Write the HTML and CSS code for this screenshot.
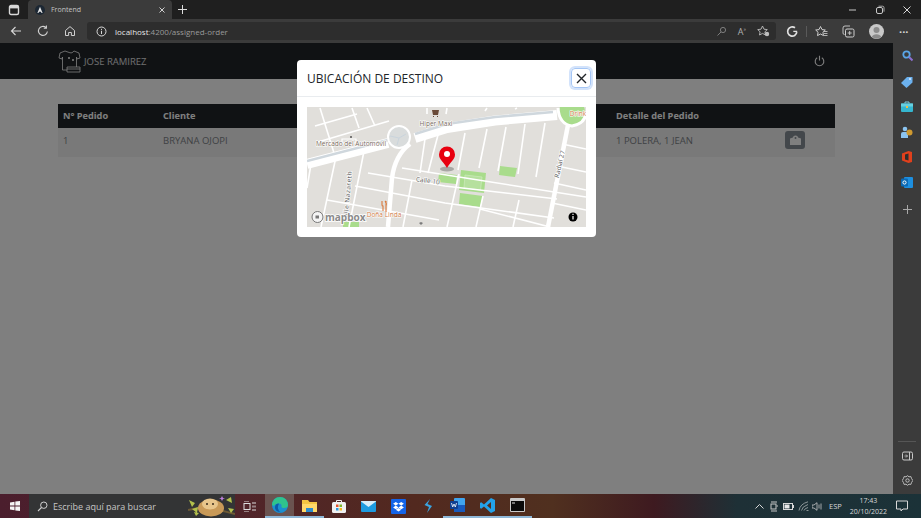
FILE: index.html
```html
<!DOCTYPE html>
<html lang="en">
<head>
  <meta charset="UTF-8">
  <meta name="viewport" content="width=device-width, initial-scale=1.0">
  <title>Frontend</title>
  <link rel="stylesheet" href="styles.css">
</head>
<body>

<div class="tabbar">
  <svg class="tab-actions" width="12" height="12" viewBox="0 0 12 12"><rect x="1.5" y="1.5" width="9" height="9" rx="1.5" fill="none" stroke="#d8d8d8" stroke-width="1.4"/><rect x="2" y="2" width="8" height="2.4" fill="#d8d8d8"/></svg>
  <div class="tab">
    <svg width="10" height="10" viewBox="0 0 10 10"><circle cx="5" cy="5" r="5" fill="#1c2733"/><path d="M5 1.8 7.6 8H6.5L6 6.7H4L3.5 8H2.4Z" fill="#e8e8e8"/></svg>
    <span class="tab-title">Frontend</span>
    <svg class="tab-close" width="8" height="8" viewBox="0 0 8 8"><path d="M1.5 1.5l5 5M6.5 1.5l-5 5" stroke="#d0d0d0" stroke-width="1"/></svg>
  </div>
  <svg class="tab-new" width="11" height="11" viewBox="0 0 11 11"><path d="M5.5 1v9M1 5.5h9" stroke="#dcdcdc" stroke-width="1"/></svg>
  <div class="window-btns">
    <svg width="10" height="10" viewBox="0 0 10 10"><path d="M1 5h7" stroke="#c8c8c8"/></svg>
    <svg width="10" height="10" viewBox="0 0 10 10"><rect x="1.5" y="2.5" width="6" height="6" rx="1.5" fill="none" stroke="#c8c8c8"/><path d="M3.5 1.2h4A1.5 1.5 0 0 1 9 2.700v4" fill="none" stroke="#c8c8c8" stroke-width=".8"/></svg>
    <svg width="10" height="10" viewBox="0 0 10 10"><path d="M1.500 1.500l7 7M8.500 1.500l-7 7" stroke="#d8d8d8" stroke-width="1"/></svg>
  </div>
</div>

<div class="toolbar">
  <svg class="nav-icon" width="12" height="12" viewBox="0 0 12 12"><path d="M11 6H1.500M5.500 2 1.500 6l4 4" fill="none" stroke="#d8d8d8" stroke-width="1.100"/></svg>
  <svg class="nav-icon" width="12" height="12" viewBox="0 0 12 12"><path d="M10.400 6.500A4.500 4.500 0 1 1 8.800 2.400M9.400 .6v2.600H6.800" fill="none" stroke="#d0d0d0" stroke-width="1.100"/></svg>
  <svg class="nav-icon" width="12" height="12" viewBox="0 0 12 12"><path d="M1.500 5.500 6 1.600l4.500 3.900V10.500H7.400V7.500H4.600V10.500H1.500Z" fill="none" stroke="#d0d0d0" stroke-width="1"/></svg>
  <div class="addressbar">
    <svg width="11" height="11" viewBox="0 0 11 11"><circle cx="5.500" cy="5.500" r="4.500" fill="none" stroke="#d8d8d8"/><path d="M5.500 4.800v3.200M5.500 2.800v1.100" stroke="#d8d8d8"/></svg>
    <span class="url"><b>localhost</b>:4200/assigned-order</span>
    <div class="address-icons">
      <svg width="11" height="11" viewBox="0 0 11 11"><circle cx="7" cy="4" r="2.600" fill="none" stroke="#7d7d7d"/><path d="M5 6 1.500 9.500" stroke="#7d7d7d"/></svg>
      <span class="read-aloud">A<sup>»</sup></span>
      <svg width="13" height="12" viewBox="0 0 13 12"><path d="M5.500 1 7 4.200l3.300.4-2.400 2.200.6 3.200-3-1.600-3 1.600.6-3.200L.7 4.600 4 4.200Z" fill="none" stroke="#bdbdbd" stroke-width=".9"/><circle cx="10" cy="9" r="2.200" fill="#bdbdbd"/></svg>
    </div>
  </div>
  <div class="toolbar-right">
    <svg width="13" height="13" viewBox="0 0 13 13"><path d="M10.800 7.200A4.600 4.600 0 1 1 9 2.800" fill="none" stroke="#e2e2e2" stroke-width="1.700"/><path d="M7.300 6.400h3.900" stroke="#e2e2e2" stroke-width="1.300"/></svg>
    <span class="toolbar-sep"></span>
    <svg width="13" height="13" viewBox="0 0 13 13"><path d="M5.500 1.500 7 4.600l3.300.4-2.400 2.300.6 3.300-3-1.600-3 1.600.6-3.300L.7 5 4 4.600Z" fill="none" stroke="#d0d0d0"/><path d="M9 6.500h3.500M9 8.500h3.500M9 10.500h3.500" stroke="#d0d0d0" stroke-width=".8"/></svg>
    <svg width="13" height="13" viewBox="0 0 13 13"><rect x="3.500" y="4" width="8.500" height="8" rx="1.500" fill="none" stroke="#d0d0d0"/><path d="M2.500 9.500A1.500 1.500 0 0 1 1 8V3a2 2 0 0 1 2-2h5M7.700 6v4M5.700 8h4" fill="none" stroke="#d0d0d0" stroke-width=".9"/></svg>
    <svg class="avatar" width="15" height="15" viewBox="0 0 15 15"><circle cx="7.500" cy="7.500" r="7.500" fill="#c9c9c9"/><circle cx="7.500" cy="6" r="3" fill="#8b8b8b"/><path d="M2.800 12.800a5 4 0 0 1 9.400 0 7.500 7.500 0 0 1-9.400 0Z" fill="#8b8b8b"/></svg>
    <span class="more">···</span>
  </div>
</div>

<div class="viewport">
  <main class="app">
    <nav class="app-nav">
      <svg class="app-logo" width="23" height="24" viewBox="0 0 23 24"><path d="M7 2 2 4 1 9l3 1 .5-2V21h14V8l.5 2 3-1-1-5-5-2-2 1.800h-2Z" fill="none" stroke="#fff" stroke-width=".8"/><circle cx="11" cy="9" r="1" fill="#fff"/><circle cx="15" cy="11" r="1" fill="#fff"/><path d="M9 18h13v5H9zM9 20h13" fill="#212529" stroke="#fff" stroke-width=".8"/></svg>
      <span class="app-user">JOSE RAMIREZ</span>
      <svg class="app-power" width="11" height="12" viewBox="0 0 11 12"><path d="M3.200 2.800a4.300 4.300 0 1 0 4.600 0M5.500 .8v4.600" fill="none" stroke="#fff" stroke-width="1.100"/></svg>
    </nav>
    <div class="app-content">
      <table class="orders">
        <thead>
          <tr>
            <th class="col-id">N° Pedido</th>
            <th class="col-client">Cliente</th>
            <th class="col-hidden"></th>
            <th class="col-detail">Detalle del Pedido</th>
            <th></th>
          </tr>
        </thead>
        <tbody>
          <tr>
            <td>1</td>
            <td>BRYANA OJOPI</td>
            <td></td>
            <td>1 POLERA, 1 JEAN</td>
            <td>
              <button class="map-btn" type="button">
                <svg width="11" height="10" viewBox="0 0 11 10"><path d="M0 3.500 3 2.500 5.500 3.500 8 2.500 11 3.500V10H0Z" fill="#fff"/><circle cx="5.500" cy="3" r="2.600" fill="#fff"/><circle cx="5.500" cy="3" r="1" fill="#868e96"/></svg>
              </button>
            </td>
          </tr>
        </tbody>
      </table>
    </div>

    <div class="backdrop">
      <div class="modal">
        <div class="modal-header">
          <h5 class="modal-title">UBICACIÓN DE DESTINO</h5>
          <button class="modal-close" type="button">
            <svg width="11" height="11" viewBox="0 0 11 11"><path d="M1 1l9 9M10 1l-9 9" stroke="#212529" stroke-width="1.400"/></svg>
          </button>
        </div>
        <div class="modal-body">
          <svg class="map" width="279" height="120" viewBox="0 -1 279 120">
            <rect y="-1" width="279" height="120" fill="#e1dfdb"/>
            <!-- parks -->
            <g fill="#a9dc8c">
              <circle cx="265" cy="4" r="13"/>
              <path d="M132 65l18 2-1 9-18-2Z"/>
              <path d="M154 62l25 3-2 20-25-3Z"/>
              <path d="M153 85l23 3-3 11-21-3Z"/>
              <path d="M193 58l17 2-2 9-16-2Z"/>
              <path d="M36 114h16v5H36Z"/>
            </g>
            <path d="M158 67l17 2-1.500 13-16.500-2Z" fill="#b6e09e" stroke="#c9e8b6" stroke-width=".8"/>
            <!-- small streets -->
            <g fill="none" stroke="#fff" stroke-width="1.600">
              <path d="M13 0 27 45M8 18 50 6M11 34 82 13M45 0 52 20M60 0 68 18"/>
              <path d="M5 50 0 80M30 44 14 119M58 38 42 119"/>
              <path d="M118 31 113 65M131 27 121 65M158 25 151 62M180 21 172 60M199 19 191 63M218 16 211 66M238 15 229 69"/>
              <path d="M61 65 138 78 250 91M95 60 279 89"/>
              <path d="M48 78 138 95 247 110"/>
              <path d="M20 92 132 112"/>
              <path d="M152 66 140 119M176 88 169 119M212 92 206 119M105 72 96 119"/>
              <path d="M173 101 243 119M247 75 279 82M250 58 279 64M255 36 279 41M245 95 279 102"/>
              <path d="M120 0V6M140 0 139 6M180 0 178 3M210 0 208 1"/>
            </g>
            <!-- main avenue -->
            <path d="M0 56 81 35M108 30 140 20 188 12.500 250 7" fill="none" stroke="#fff" stroke-width="10"/>
            <path d="M0 53 81 32M108 26 140 16 188 9 246 4" fill="none" stroke="#cfd7dd" stroke-width="2.500"/>
            <path d="M261 17 241 119" fill="none" stroke="#fff" stroke-width="4.500"/>
            <path d="M103 36Q88 47 85 70L81 119" fill="none" stroke="#fff" stroke-width="4.500"/>
            <path d="M86 20 91 30M251 0Q252 16 265 18 278 16 279 5" fill="none" stroke="#fff" stroke-width="3"/>
            <circle cx="92" cy="29" r="11" fill="#d9dcdc" stroke="#fff" stroke-width="2"/>
            <path d="M83 28 92 30 90 37M92 30 99 26" fill="none" stroke="#c5d2dc" stroke-width=".8"/>
            <path d="M35 31h14v4H35Z" fill="none" stroke="#fff" stroke-width="1.200"/>
            <circle cx="44" cy="29" r="1" fill="#555"/>
            <!-- labels -->
            <g class="map-label">
              <text class="map-label-brown" x="129" y="18" text-anchor="middle">Hiper Maxi</text>
              <text class="map-label-brown" x="44" y="38" text-anchor="middle">Mercado del Automóvil</text>
              <text class="map-label-orange" x="271" y="7.500" text-anchor="middle">Drink</text>
              <text x="121" y="75" text-anchor="middle" transform="rotate(8 121 72)">Calle 10</text>
              <text x="252" y="59" text-anchor="middle" transform="rotate(-77 252 56)">Radial 27</text>
              <text class="map-label-wide" x="40" y="89" text-anchor="middle" transform="rotate(-85 40 86)">alle Nazareth</text>
              <text class="map-label-orange" x="77" y="109" text-anchor="middle">Doña Linda</text>
            </g>
            <path d="M125 2h7l-1 5h-5ZM126 8h1v1h-1ZM130 8h1v1h-1Z" fill="#6a4a38"/>
            <path d="M75 93v4q0 1 1 1v5M79 93v11M78 93q2 2 1 5" fill="none" stroke="#d9783c" stroke-width="1.100"/>
            <path d="M112 115l2-1 2 1-2 2Z" fill="#7b7b7b"/>
            <!-- mapbox logo -->
            <circle cx="10.500" cy="109" r="5.500" fill="#f4f4f4" stroke="#777" stroke-width="1"/>
            <path d="M8.500 107.500h3.500v3H8.500Z" fill="#777"/>
            <text class="map-logo" x="18" y="112.500">mapbox</text>
            <circle cx="266" cy="109" r="4.500" fill="#000"/>
            <path d="M266 108v3.500M266 105.800v1.100" stroke="#fff" stroke-width="1.200"/>
            <!-- pin -->
            <ellipse cx="140" cy="61" rx="7" ry="2.500" fill="#000" opacity=".25"/>
            <path d="M140 60C137 54 132 52 132 46.500A8 8 0 0 1 148 46.500C148 52 143 54 140 60Z" fill="#e8000f"/>
            <circle cx="140" cy="46" r="3" fill="#fff"/>
          </svg>
        </div>
      </div>
    </div>
  </main>

  <aside class="edge-side">
    <svg width="11" height="12" viewBox="0 0 11 12"><circle cx="4.500" cy="4.500" r="3.200" fill="none" stroke="#5aa7e8" stroke-width="1.800"/><path d="M7 7l3.500 3.500" stroke="#8c6fd0" stroke-width="2"/></svg>
    <svg width="12" height="12" viewBox="0 0 12 12"><path d="M0 7 6 1h5.500v5.500l-6 5.500Z" fill="#6cb1ee"/><circle cx="9" cy="3" r="1" fill="#dcecff"/></svg>
    <svg width="12" height="11" viewBox="0 0 12 11"><path d="M4 2.500V1h4v1.500" fill="none" stroke="#7fd0e0"/><rect y="2.500" width="12" height="8.500" rx="1" fill="#35b6cf"/><rect y="2.500" width="12" height="3" fill="#66cfe0"/><rect x="5" y="5" width="2" height="2" fill="#f0c040"/></svg>
    <svg width="12" height="12" viewBox="0 0 12 12"><circle cx="4" cy="3" r="2.300" fill="#8cc4f0"/><path d="M0 12V8q0-2 2-2h4q1 0 1 2v4Z" fill="#8cc4f0"/><circle cx="8.500" cy="6.500" r="3" fill="#d09a30"/></svg>
    <svg width="10" height="12" viewBox="0 0 10 12"><path d="M0 2.500 6.500 0 10 1v10L6.500 12 0 9.500Z" fill="#e0401c"/><path d="M3 3.500 6.500 2.500V9.500L3 8.500Z" fill="#2d2d2d"/></svg>
    <svg width="12" height="11" viewBox="0 0 12 11"><rect x="3" width="9" height="11" rx="1" fill="#1d8fe0"/><rect width="7" height="8" y="1.500" rx="1" fill="#0b6ab5"/><circle cx="3.500" cy="5.500" r="1.600" fill="none" stroke="#fff"/></svg>
    <svg class="edge-plus" width="9" height="9" viewBox="0 0 9 9"><path d="M4.500 0v9M0 4.500h9" stroke="#a8a8a8" stroke-width="1"/></svg>
    <div class="edge-bottom">
      <span class="edge-rule"></span>
      <svg width="11" height="10" viewBox="0 0 11 10"><rect x=".5" y="1" width="10" height="8" rx="1.500" fill="none" stroke="#c8c8c8"/><path d="M7.500 1v8" stroke="#c8c8c8"/><path d="M2.500 5h3M4 3.500 5.500 5 4 6.500" fill="none" stroke="#c8c8c8" stroke-width=".8"/></svg>
      <svg width="11" height="11" viewBox="0 0 11 11"><path d="M5.500 .7 7 1.800 8.900 1.600 9.500 3.400 10.800 5.500 9.500 7.600 8.900 9.400 7 9.200 5.500 10.300 4 9.200 2.100 9.400 1.500 7.600 .2 5.500 1.500 3.400 2.100 1.600 4 1.800Z" fill="none" stroke="#c8c8c8" stroke-width=".9"/><circle cx="5.500" cy="5.500" r="1.700" fill="none" stroke="#c8c8c8" stroke-width=".9"/></svg>
    </div>
  </aside>
</div>

<footer class="taskbar">
  <div class="start">
    <svg width="10" height="10" viewBox="0 0 10 10"><path d="M0 1.400 4.500.7v3.900H0ZM5.300.6 10 0v4.600H5.300ZM0 5.400h4.500v3.900L0 8.600ZM5.300 5.400H10V10L5.300 9.400Z" fill="#f4f4f4"/></svg>
  </div>
  <div class="search">
    <svg width="11" height="11" viewBox="0 0 11 11"><circle cx="6.800" cy="4.200" r="3.200" fill="none" stroke="#d0d0d0"/><path d="M4.500 6.500 1 10" stroke="#d0d0d0" stroke-width="1.100"/></svg>
    <span class="search-text">Escribe aquí para buscar</span>
    <svg class="search-art" width="47" height="23" viewBox="0 0 47 23">
      <path d="M0 15Q16 10 47 19" fill="none" stroke="#6e5a34" stroke-width="2"/>
      <path d="M1 5l6 3-3 4ZM4 14l6-2-1 6ZM38 5l5-3 1 6ZM40 13l6 1-3 4ZM6 17l5 1-3 3Z" fill="#b3c04c"/>
      <ellipse cx="23" cy="13" rx="13" ry="8.500" fill="#c99a58"/>
      <ellipse cx="22" cy="9" rx="8" ry="5.500" fill="#e8c68c"/>
      <circle cx="19" cy="9" r="1" fill="#3a2a1a"/><circle cx="25" cy="9" r="1" fill="#3a2a1a"/>
      <path d="M34 1l1 2 2 .5-2 .5-1 2-1-2-2-.5 2-.5Z" fill="#c080e0"/>
    </svg>
  </div>
  <div class="task-slot">
    <svg width="13" height="11" viewBox="0 0 13 11"><path d="M1 0h5M1 11h5" stroke="#ddd"/><rect x="1" y="2.500" width="6" height="6" fill="none" stroke="#ddd"/><path d="M10 1v2M10 4.500v2M10 8v2M12 1v2M12 4.500v2M12 8v2" stroke="#ddd"/></svg>
  </div>
  <div class="task-slot task-slot-active">
    <svg width="16" height="16" viewBox="0 0 16 16"><circle cx="8" cy="8" r="8" fill="#1b8fd0"/><path d="M0 8Q1 0 8 0q7 0 8 8 0 3-4 3-3 0-2.500-2 .5-2-2.500-2.500Q3 6 2 9Z" fill="#2fc48d"/><path d="M7 6.500q-4 0-4 4 0 4 6 5-5-3-2-9Z" fill="#0d5aa7"/></svg>
  </div>
  <div class="task-slot task-slot-open">
    <svg width="15" height="13" viewBox="0 0 15 13"><path d="M0 1h6l1.500 2H15v10H0Z" fill="#f4c542"/><rect y="5" width="15" height="8" fill="#ffd86a"/><rect x="4" y="9" width="7" height="4" fill="#2b8ccf"/></svg>
  </div>
  <div class="task-slot">
    <svg width="14" height="14" viewBox="0 0 14 14"><path d="M4.500 3V1.500h5V3" fill="none" stroke="#eee"/><rect y="3" width="14" height="11" rx="1.500" fill="#f1f1f1"/><rect x="4" y="5.500" width="2.500" height="2.500" fill="#e8532b"/><rect x="7.500" y="5.500" width="2.500" height="2.500" fill="#7db82a"/><rect x="4" y="9" width="2.500" height="2.500" fill="#2a9be0"/><rect x="7.500" y="9" width="2.500" height="2.500" fill="#f5b81f"/></svg>
  </div>
  <div class="task-slot">
    <svg width="15" height="11" viewBox="0 0 15 11"><rect width="15" height="11" rx="1" fill="#1d9be0"/><path d="M0 .5 7.500 6 15 .5V0H0Z" fill="#d7eefa"/></svg>
  </div>
  <div class="task-slot">
    <svg width="15" height="15" viewBox="0 0 15 15"><rect width="15" height="15" rx="1" fill="#1464e8"/><path d="M4.800 3 7.500 4.800 4.800 6.600 2.100 4.800ZM10.200 3 12.900 4.800 10.200 6.600 7.500 4.800ZM4.800 6.600 7.500 8.400 10.200 6.600 12.900 8.400 10.200 10.200 7.500 8.400 4.800 10.200 2.100 8.400ZM4.800 10.800 7.500 9 10.200 10.800 7.500 12.500Z" fill="#fff"/></svg>
  </div>
  <div class="task-slot">
    <svg width="10" height="14" viewBox="0 0 10 14"><path d="M7 0 1.500 6 6 8 4 14 9 7 4.500 5Z" fill="#3aa4e0"/></svg>
  </div>
  <div class="task-slot task-slot-open">
    <svg width="15" height="14" viewBox="0 0 15 14"><rect x="4" y="0" width="11" height="14" rx="1" fill="#41a5ee"/><rect x="4" y="7" width="11" height="7" fill="#185abd"/><rect y="3" width="8" height="8" rx="1" fill="#103f91"/><path d="M1.500 5 2.700 9 4 6 5.300 9 6.500 5" fill="none" stroke="#fff" stroke-width=".8"/></svg>
  </div>
  <div class="task-slot task-slot-open">
    <svg width="15" height="15" viewBox="0 0 15 15"><path d="M11 0 15 2V13L11 15 4 8.500 1.200 10.800 0 10V5L1.200 4.200 4 6.500ZM11 4 7 7.500 11 11Z" fill="#23a3ea"/></svg>
  </div>
  <div class="task-slot task-slot-open">
    <svg width="15" height="14" viewBox="0 0 15 14"><rect width="15" height="14" rx="1" fill="#c9c9c9"/><rect x="1" y="3" width="13" height="10" fill="#0a0a0a"/><path d="M2 5h3" stroke="#ddd"/></svg>
  </div>

  <div class="tray">
    <svg class="tray-chevron" width="9" height="6" viewBox="0 0 9 6"><path d="M.5 5.500 4.500 1.500 8.500 5.500" fill="none" stroke="#d8d8d8"/></svg>
    <svg class="tray-device" width="8" height="11" viewBox="0 0 8 11"><path d="M1 1h6M1 10h6" stroke="#c8c8c8"/><rect x="1" y="3" width="5" height="5" fill="none" stroke="#c8c8c8"/><path d="M6.500 5h1.500" stroke="#c8c8c8"/></svg>
    <svg width="11" height="7" viewBox="0 0 11 7"><rect x=".5" y=".5" width="9" height="6" fill="none" stroke="#d8d8d8"/><rect x="1.500" y="1.500" width="5" height="4" fill="#e8e8e8"/><path d="M10.500 2v3" stroke="#d8d8d8"/></svg>
    <svg width="11" height="10" viewBox="0 0 11 10"><path d="M1 9.500Q2 3 10 .8M3.500 9.500Q4 5.500 10 3.500M6 9.500Q6.500 7.500 10 6.500M8.500 9.500h2" fill="none" stroke="#a8b0b0" stroke-width=".8"/></svg>
    <svg width="10" height="9" viewBox="0 0 10 9"><path d="M0 3h2L5 .7v7.600L2 6H0Z" fill="none" stroke="#c8c8c8" stroke-width=".8"/><path d="M7 2.500v4M9 1.500v6" stroke="#c8c8c8" stroke-width=".8"/></svg>
    <span class="tray-lang">ESP</span>
    <div class="tray-clock"><span>17:43</span><span>20/10/2022</span></div>
    <svg class="tray-notify" width="12" height="12" viewBox="0 0 12 12"><path d="M.5 1h11v8H7L5 11V9H.5Z" fill="none" stroke="#d8d8d8"/></svg>
  </div>
</footer>

</body>
</html>
```

FILE: styles.css
```css
html, body {
  height: 100%;
}
body {
  margin: 0;
  display: flex;
  flex-direction: column;
  overflow: hidden;
  font-family: "Open Sans", sans-serif;
  background-color: #3b3b3b;
}
svg {
  display: block;
  flex: none;
}

/* browser chrome */
.tabbar {
  height: 19px;
  display: flex;
  align-items: center;
  background-color: #1f1f1f;
  padding-left: 8px;
}
.tab {
  width: 144px;
  height: 19px;
  margin-left: 8px;
  padding: 0 6px 0 7px;
  box-sizing: border-box;
  display: flex;
  align-items: center;
  background-color: #3b3b3b;
  border-radius: 4px 4px 0 0;
}
.tab-title {
  margin-left: 6px;
  font-size: 7px;
  color: #c4c4c4;
}
.tab-close {
  margin-left: auto;
}
.tab-new {
  margin-left: 5px;
}
.window-btns {
  margin-left: auto;
  display: flex;
  gap: 17px;
  padding-right: 9px;
}
.toolbar {
  height: 24px;
  display: flex;
  align-items: center;
  background-color: #3b3b3b;
  padding-left: 10px;
}
.toolbar .nav-icon {
  margin-right: 15px;
}
.addressbar {
  width: 689px;
  height: 18px;
  box-sizing: border-box;
  margin-left: -4px;
  padding: 0 6px 0 9px;
  display: flex;
  align-items: center;
  background-color: #2d2d2d;
  border-radius: 3px;
}
.url {
  margin-left: 8px;
  font-size: 8px;
  color: #9a9a9a;
}
.url b {
  font-weight: 400;
  color: #e6e6e6;
}
.address-icons {
  margin-left: auto;
  display: flex;
  align-items: center;
  gap: 11px;
}
.read-aloud {
  font-size: 9px;
  line-height: 1;
  color: #b0b0b0;
}
.read-aloud sup {
  font-size: 5px;
}
.toolbar-right {
  margin-left: 10px;
  display: flex;
  align-items: center;
  gap: 14px;
}
.toolbar-sep {
  width: 1px;
  height: 11px;
  margin: 0 -6px 0 -7px;
  background-color: #5a5a5a;
}
.more {
  margin-left: 1px;
  font-size: 11px;
  font-weight: 700;
  line-height: 1;
  color: #d8d8d8;
}

/* page under the modal */
.viewport {
  flex: 1;
  display: flex;
  min-height: 0;
}
.app {
  flex: 1;
  position: relative;
  background-color: #fff;
  color: #212529;
  overflow: hidden;
}
.app-nav {
  height: 36px;
  display: flex;
  align-items: center;
  padding: 0 68px 0 58px;
  background-color: #212529;
}
.app-user {
  margin-left: 3px;
  font-size: 9.5px;
  color: #fff;
  opacity: .85;
}
.app-power {
  margin-left: auto;
}
.app-content {
  padding: 25px 58px 0;
}
.orders {
  width: 777px;
  border-collapse: collapse;
  table-layout: fixed;
  font-size: 9.5px;
}
.orders th {
  height: 24px;
  box-sizing: border-box;
  padding: 0 0 2px 5px;
  text-align: left;
  font-size: 9.2px;
  font-weight: 700;
  color: #fff;
  background-color: #212529;
}
.orders td {
  height: 29px;
  box-sizing: border-box;
  padding: 0 0 5px 5px;
  color: #808489;
  background-color: #f2f2f2;
}
.col-id {
  width: 100px;
}
.col-client {
  width: 145px;
}
.col-hidden {
  width: 308px;
}
.col-detail {
  width: 169px;
}
.map-btn {
  width: 20px;
  height: 18px;
  padding: 0;
  display: flex;
  align-items: center;
  justify-content: center;
  border: 0;
  border-radius: 3px;
  background-color: #868e96;
}

/* modal */
.backdrop {
  position: absolute;
  top: 0;
  left: 0;
  right: 0;
  bottom: 0;
  display: flex;
  justify-content: center;
  align-items: flex-start;
  background-color: rgba(0, 0, 0, .5);
}
.modal {
  width: 299px;
  height: 177px;
  margin-top: 17px;
  background-color: #fff;
  border-radius: 4px;
}
.modal-header {
  height: 37px;
  box-sizing: border-box;
  padding: 0 5px 0 10px;
  display: flex;
  align-items: center;
  justify-content: space-between;
  border-bottom: 1px solid #e9ecef;
}
.modal-title {
  margin: 0;
  font-size: 12px;
  font-weight: 400;
  color: #212529;
}
.modal-close {
  width: 20px;
  height: 20px;
  padding: 0;
  display: flex;
  align-items: center;
  justify-content: center;
  background: none;
  border: 1px solid #a5c6f5;
  border-radius: 4px;
  box-shadow: 0 0 0 2px #d3e3fb;
}
.modal-body {
  padding: 10px;
}
.map-label {
  font-family: "Open Sans", sans-serif;
  font-size: 6.5px;
  fill: #555;
  stroke: #fff;
  stroke-width: 1.2px;
  paint-order: stroke;
}
.map-label-brown {
  fill: #77685a;
}
.map-label-orange {
  fill: #cf7a45;
}
.map-label-wide {
  letter-spacing: .5px;
}
.map-logo {
  font-family: "Open Sans", sans-serif;
  font-size: 10px;
  font-weight: 700;
  fill: #8a8a8a;
  stroke: #fff;
  stroke-width: 1.6px;
  paint-order: stroke;
}

/* edge side panel */
.edge-side {
  width: 28px;
  box-sizing: border-box;
  padding-top: 7px;
  display: flex;
  flex-direction: column;
  align-items: center;
  gap: 13.5px;
  background-color: #3b3b3b;
}
.edge-plus {
  margin-top: 4px;
}
.edge-bottom {
  margin-top: auto;
  padding-bottom: 8px;
  display: flex;
  flex-direction: column;
  align-items: center;
  gap: 14px;
}
.edge-rule {
  width: 18px;
  height: 1px;
  margin-bottom: -5px;
  background-color: #565656;
}

/* windows taskbar */
.taskbar {
  height: 24px;
  display: flex;
  align-items: center;
  background: linear-gradient(90deg, #4b1e2d 0, #50242a 25%, #52291f 45%, #50301f 60%, #3e1a20 71%, #1e3036 80%, #1b3238 100%);
}
.start {
  width: 29px;
  display: flex;
  justify-content: center;
}
.search {
  width: 206px;
  height: 24px;
  box-sizing: border-box;
  padding-left: 8px;
  display: flex;
  align-items: center;
  background-color: #333435;
}
.search-text {
  margin-left: 5px;
  font-size: 9px;
  color: #c6c6c6;
}
.search-art {
  margin-left: auto;
}
.task-slot {
  width: 29.7px;
  height: 24px;
  box-sizing: border-box;
  display: flex;
  align-items: center;
  justify-content: center;
}
.task-slot-open {
  border-bottom: 2px solid #8fb8d8;
}
.task-slot-active {
  background-color: #6a5350;
  border-bottom: 2px solid #8fb8d8;
}
.tray {
  margin-left: auto;
  display: flex;
  align-items: center;
  gap: 3.5px;
  padding-right: 13px;
}
.tray-chevron {
  margin-right: 3px;
}
.tray-device {
  margin-right: 1.5px;
}
.tray-lang {
  margin-left: 3.5px;
  font-size: 7.5px;
  color: #d8d8d8;
}
.tray-clock {
  margin-left: 4.5px;
  display: flex;
  flex-direction: column;
  align-items: center;
  font-size: 7px;
  line-height: 11px;
  color: #d8d8d8;
}
.tray-notify {
  margin-left: 5.5px;
}
```
